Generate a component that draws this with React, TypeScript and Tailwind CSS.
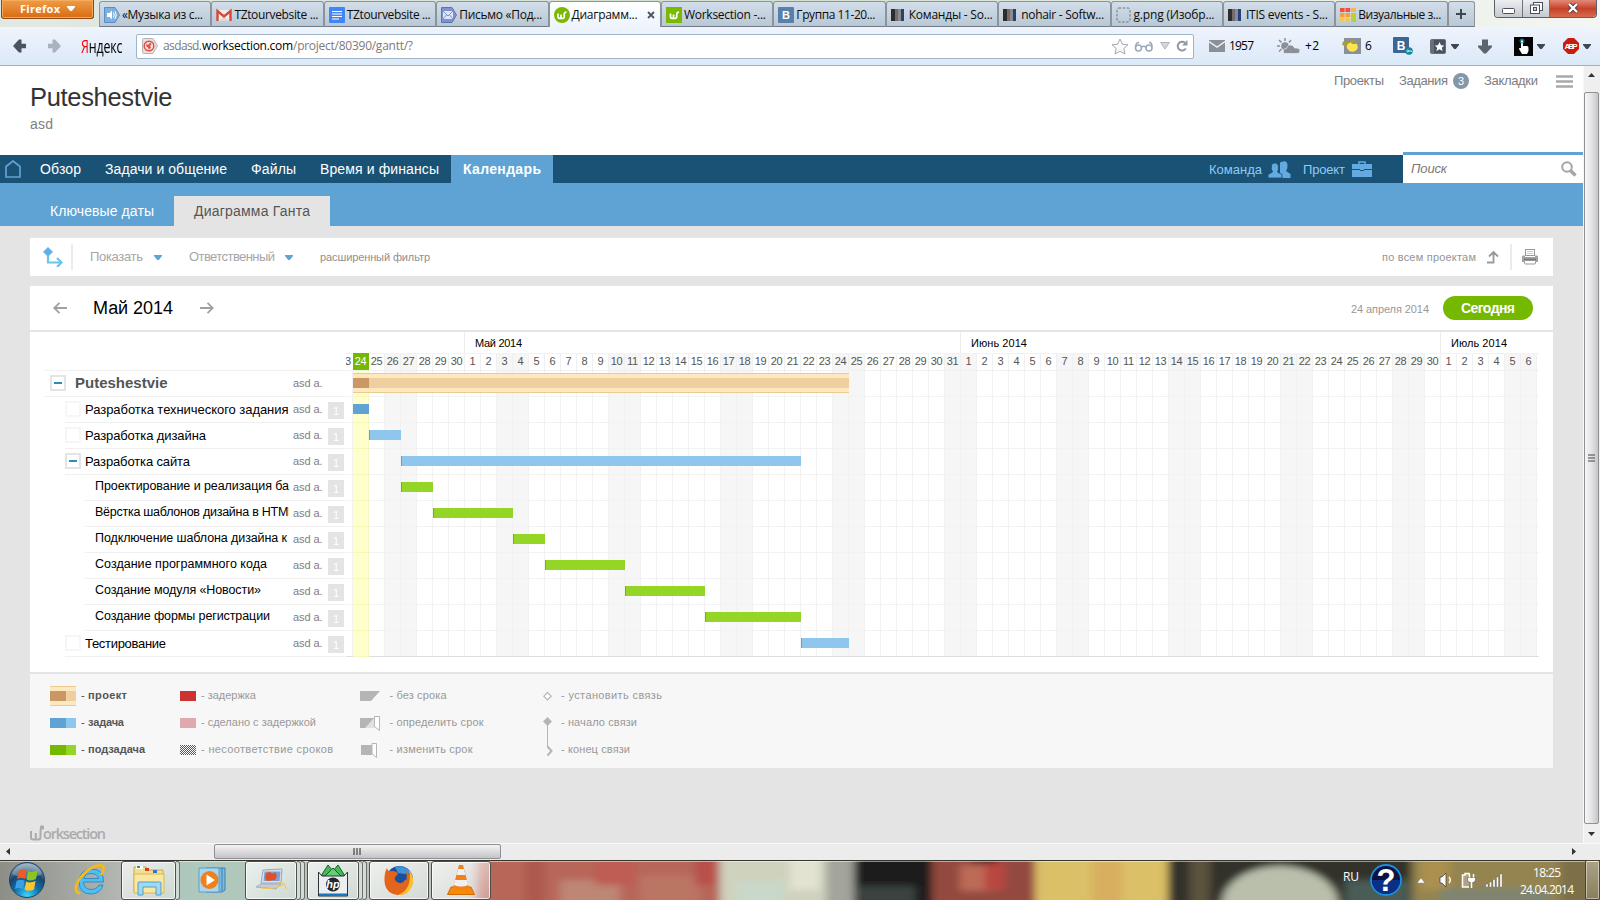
import React, { useLayoutEffect, useRef } from 'react';

const ARIAL = "font-['Liberation_Sans',Arial,sans-serif]";
const SEGOE = "font-['Open_Sans','Noto_Sans',sans-serif]";

/** Single line of text whose letter spacing is tuned so that it spans exactly `w` pixels. */
function Fit({ w, className = '', children }: { w: number; className?: string; children: string }) {
  const ref = useRef<HTMLSpanElement>(null);
  useLayoutEffect(() => {
    const el = ref.current;
    if (!el) return;
    el.style.letterSpacing = '0px';
    const natural = el.getBoundingClientRect().width;
    el.style.letterSpacing = (w - natural) / Math.max(1, children.length - 1) + 'px';
  }, [w, children]);
  return (
    <span className={'inline-block shrink-0 whitespace-nowrap ' + className} style={{ width: w }}>
      <span ref={ref}>{children}</span>
    </span>
  );
}

function Caret({ className = '' }: { className?: string }) {
  return (
    <svg viewBox="0 0 8 5" className={'h-[5px] w-2 shrink-0 ' + className}>
      <path d="M0 0H8V1L4.800 5H3.200L0 1Z" fill="currentColor" />
    </svg>
  );
}

/* ---------- favicons ---------- */

const favicons: Record<string, React.ReactNode> = {
  sound: (
    <>
      <path d="M.5 .5H11L15.5 8L11 15.5H.5Z" fill="#7fb0dc" stroke="#5b8fc4" />
      <path d="M3 6H5.500L8 3.500V12.500L5.500 10H3Z" fill="#fff" />
      <path d="M9.500 5.500Q11 8 9.500 10.500M11 4Q13.500 8 11 12" stroke="#fff" fill="none" />
    </>
  ),
  gmail: (
    <>
      <rect x="1" y="3" width="14" height="11" fill="#f1eeea" />
      <path d="M3 14L8 9L13 14" fill="#dcd8d2" />
      <path d="M1.500 14V4L8 9.500L14.500 4V14" fill="none" stroke="#d5483c" strokeWidth="2.400" />
    </>
  ),
  docs: (
    <>
      <rect width="16" height="16" rx="1" fill="#4285f4" />
      <path d="M3 4.500H13M3 7H13M3 9.500H13M3 12H10" stroke="#fff" strokeWidth="1.200" />
    </>
  ),
  letter: (
    <>
      <path d="M.5 .5H11L15.500 8L11 15.500H.5Z" fill="#7d93cf" stroke="#5d74b4" />
      <rect x="2" y="4" width="10" height="8" fill="#dfe5f6" />
      <path d="M2 4L7 9L12 4M2 12L5.500 8M12 12L8.500 8" stroke="#7d93cf" fill="none" />
    </>
  ),
  wsRound: (
    <>
      <circle cx="8" cy="8" r="8" fill="#79b900" />
      <path d="M4 6.500V9.500Q4 11.300 5.500 11.300H9Q10.200 11.300 10.200 10V7.500Q10.200 5.300 12.500 5M7 7.500V11" stroke="#fff" strokeWidth="1.700" fill="none" />
    </>
  ),
  ws: (
    <>
      <rect width="16" height="16" fill="#79b900" />
      <path d="M4.500 6.500V9.500Q4.500 11.300 6 11.300H9.500Q10.700 11.300 10.700 10V7.500Q10.700 5.300 13 5M7.500 7.500V11" stroke="#fff" strokeWidth="1.700" fill="none" />
    </>
  ),
  vk: (
    <>
      <rect width="16" height="16" rx="1" fill="#5a7fab" />
      <text x="8" y="12" textAnchor="middle" fontSize="11" fontWeight="bold" fill="#fff" fontFamily="Liberation Sans">В</text>
    </>
  ),
  bars: (
    <>
      <rect x="0" y="2" width="4" height="12" fill="#2d2d30" />
      <rect x="4" y="2" width="3" height="12" fill="#6e6e70" />
      <rect x="7" y="2" width="3" height="12" fill="#8f8a88" />
      <rect x="10" y="2" width="3" height="12" fill="#24407f" />
    </>
  ),
  blank: <rect x="1" y="1" width="13" height="14" rx="2" fill="none" stroke="#6d747c" strokeDasharray="2.500 1.500" />,
  visual: (
    <>
      <rect x="0" y="1" width="16" height="4" fill="#f0503c" />
      <rect x="0" y="6" width="16" height="4" fill="#f7a03a" />
      <rect x="0" y="11" width="10" height="4" fill="#f6c84a" />
      <rect x="11" y="1" width="5" height="4" fill="#f7b84a" />
      <rect x="11" y="6" width="5" height="9" fill="#b5d335" />
      <path d="M5 1V15M10.500 1V15" stroke="#d5dde5" strokeWidth=".8" />
    </>
  ),
};

const tabs: { icon: string; title: string; w: number; active?: boolean }[] = [
  { icon: 'sound', title: '«Музыка из с...', w: 81 },
  { icon: 'gmail', title: 'TZtourvebsite ...', w: 84 },
  { icon: 'docs', title: 'TZtourvebsite ...', w: 84 },
  { icon: 'letter', title: 'Письмо «Под...', w: 83 },
  { icon: 'wsRound', title: 'Диаграмм...', w: 66, active: true },
  { icon: 'ws', title: 'Worksection -...', w: 82 },
  { icon: 'vk', title: 'Группа 11-20...', w: 79 },
  { icon: 'bars', title: 'Команды - So...', w: 84 },
  { icon: 'bars', title: 'nohair - Softw...', w: 83 },
  { icon: 'blank', title: 'g.png (Изобр...', w: 81 },
  { icon: 'bars', title: 'ITIS events - S...', w: 82 },
  { icon: 'visual', title: 'Визуальные з...', w: 83 },
];

function TabStrip() {
  return (
    <div className="flex h-[27px] shrink-0 bg-gradient-to-r from-[#e2e8e3] via-[#d3dfcf] to-[#f4f6f3]">
      <div className="ml-px flex h-[19px] w-[93px] items-center rounded-b-[3px] border border-t-0 border-[#8a4a14] bg-gradient-to-b from-[#ee9d45] to-[#d96a0c] pb-px pl-[18px] shadow-[inset_0_0_0_1px_#f3ab5c]">
        <Fit w={40} className="text-[11px] leading-none font-bold text-white">Firefox</Fit>
        <Caret className="ml-[7px] text-white" />
      </div>
      <div className="ml-[5px] flex pt-px">
        {tabs.map((t, i) => (
          <div
            key={i}
            className={
              'flex h-[26px] w-[112.400px] items-center rounded-t-[3px] border border-r-[1px] border-[#8b939b] pt-px pl-1 ' +
              (t.active ? 'border-b-0 bg-gradient-to-b from-white to-[#eef4fd]' : 'border-b-[#6f7a86] bg-gradient-to-b from-[#d2deea] to-[#b9c8d5]')
            }
          >
            <svg viewBox="0 0 16 16" className="size-4 shrink-0">{favicons[t.icon]}</svg>
            <Fit w={t.w} className="ml-[2px] text-[12px] leading-none text-[#0c0c0c]">{t.title}</Fit>
            {t.active && (
              <svg viewBox="0 0 8 8" className="ml-[9px] size-2"><path d="M1 1L7 7M7 1L1 7" stroke="#4c5661" strokeWidth="1.800" /></svg>
            )}
          </div>
        ))}
        <div className="flex h-[26px] w-[27px] items-center justify-center rounded-t-[3px] border border-[#8b939b] border-b-[#6f7a86] bg-gradient-to-b from-[#d2deea] to-[#b9c8d5]">
          <svg viewBox="0 0 10 10" className="size-[10px]"><path d="M5 0V10M0 5H10" stroke="#3c4650" strokeWidth="2" /></svg>
        </div>
      </div>
      <div className="ml-auto mr-[3px] flex h-[18px] w-[103px] overflow-hidden rounded-b-[4px] border border-t-0 border-[#5b6068]">
        <div className="flex w-[28px] items-center justify-center border-r border-[#70757c] bg-gradient-to-b from-[#eceef0] to-[#c6cacf]">
          <svg viewBox="0 0 13 6" className="mt-1 h-[6px] w-[13px]"><rect x=".5" y=".5" width="12" height="5" rx="1" fill="#fff" stroke="#4b4f62" /></svg>
        </div>
        <div className="flex w-[27px] items-center justify-center border-r border-[#70757c] bg-gradient-to-b from-[#eceef0] to-[#c6cacf] pb-[2px]">
          <svg viewBox="0 0 13 12" className="h-3 w-[13px]">
            <rect x="3.500" y=".5" width="9" height="8" fill="#fff" stroke="#4b4f62" />
            <rect x=".5" y="3" width="9" height="8.500" fill="#fff" stroke="#4b4f62" />
            <rect x="3.500" y="5.500" width="3" height="3" fill="#cfd3da" stroke="#4b4f62" />
          </svg>
        </div>
        <div className="flex flex-1 items-center justify-center bg-gradient-to-b from-[#e08a76] via-[#c7402a] to-[#d46a4a] pb-[2px]">
          <svg viewBox="0 0 12 10" className="h-[10px] w-3">
            <path d="M2 1L10 9M10 1L2 9" stroke="#4b3a48" strokeWidth="4" />
            <path d="M2 1L10 9M10 1L2 9" stroke="#fff" strokeWidth="2.400" />
          </svg>
        </div>
      </div>
    </div>
  );
}

function Toolbar() {
  return (
    <div className="flex h-[39px] shrink-0 items-center border-b border-[#9db4c8] bg-gradient-to-b from-[#eff4fd] to-[#dbe9f7] pl-px text-[12px] text-black">
      <svg viewBox="0 0 13 14" className="ml-3 h-[14px] w-[13px] shrink-0"><path d="M0 7L6 .5H8.500V4.800H13V9.200H8.500V13.500H6Z" fill="#4a5460" /></svg>
      <svg viewBox="0 0 13 14" className="ml-[22px] h-[14px] w-[13px] shrink-0"><path d="M13 7L7 .5H4.500V4.800H0V9.200H4.500V13.500H7Z" fill="#a9b3bf" /></svg>
      <div className="ml-[20px] flex h-5 w-[43px] items-center">
        <div className="flex origin-left scale-x-[.69] text-[18px] leading-none font-normal tracking-[-0.2px]">
          <span className="text-[#f00]">Я</span><span>ндекс</span>
        </div>
      </div>
      <div className="ml-[12px] flex h-[25px] w-[1058px] shrink-0 items-center rounded-[2px] border border-[#9fb4c8] bg-white">
        <svg viewBox="0 0 16 16" className="ml-[5px] size-4">
          <path d="M.5 1.500Q.5 .5 1.500 .5H11L15.500 8L11 15.500H1.500Q.5 15.500 .5 14.500Z" fill="#e2e2e2" stroke="#b5b5b5" />
          <circle cx="7" cy="8" r="4.800" fill="#f7dcda" stroke="#dc4f48" strokeWidth="1.400" />
          <path d="M4 6L6 7L8.500 4.500L9.500 6L8 8L9 9.500L7 11.500L6 9.500L4.500 8.500Z" fill="#dc4f48" />
        </svg>
        <Fit w={39} className="ml-[5px] text-[#7b7b7b]">asdasd.</Fit>
        <Fit w={91}>worksection.com</Fit>
        <Fit w={120} className="text-[#7b7b7b]">/project/80390/gantt/?</Fit>
        <svg viewBox="0 0 18 17" className="ml-auto h-[17px] w-[18px]"><path d="M9 1L11.400 6.200L17 6.800L12.800 10.500L14 16L9 13.200L4 16L5.200 10.500L1 6.800L6.600 6.200Z" fill="#fafafa" stroke="#a3a9b0" /></svg>
        <svg viewBox="0 0 20 11" className="ml-[5px] h-[11px] w-5" fill="none" stroke="#9ba9b8" strokeWidth="1.600">
          <circle cx="4.500" cy="7" r="3" /><circle cx="15" cy="7" r="3" /><path d="M7.500 6Q9.700 4.500 12 6M1.500 6Q2 1 5 1.500M18 6Q18 1 15 1.500" />
        </svg>
        <svg viewBox="0 0 10 8" className="ml-[6px] h-2 w-[10px]"><path d="M.7 .5H9.300L5 7Z" fill="#d5d9de" stroke="#a9b1ba" /></svg>
        <svg viewBox="0 0 12 12" className="mr-[5px] ml-[6px] size-3">
          <path d="M9.800 8.500A4.400 4.400 0 1 1 9 2.800" fill="none" stroke="#8b98a6" strokeWidth="2" /><path d="M11.500 0V5.500H6Z" fill="#8b98a6" />
        </svg>
      </div>
      <svg viewBox="0 0 16 12" className="ml-[15px] h-3 w-4"><rect width="16" height="12" fill="#8a9096" /><path d="M0 1.500L8 7L16 1.500" stroke="#e6effa" strokeWidth="1.500" fill="none" /></svg>
      <Fit w={25} className="ml-[4px]">1957</Fit>
      <svg viewBox="0 0 24 16" className="ml-[23px] h-4 w-6">
        <g stroke="#8a9096" strokeWidth="1.500"><path d="M8 0V3M2 2L4.500 4.500M0 8H3M14 2L12 4.500M2 13.500L4.500 11" /></g>
        <circle cx="8" cy="8" r="3.800" fill="#8a9096" />
        <path d="M7 15.500Q4.500 11 9.500 10.500Q11 5.500 15.500 7.500Q17.500 9 17.500 10Q23 9.500 23 13Q23 15.500 20 15.500Z" fill="#8a9096" stroke="#e6effa" strokeWidth=".7" />
      </svg>
      <Fit w={14} className="ml-[4px]">+2</Fit>
      <svg viewBox="0 0 19 16" className="ml-[23px] h-4 w-[19px]">
        <rect x="2" width="17" height="16" fill="#8a9096" />
        <path d="M1 3.500H8L9 2H14L12 5H9L4 9L0 6.500Z" fill="#a99c3c" /><path d="M9 4.500Q10 7 14.500 5.500Q17 9 14.500 12Q11.500 15 7.500 13Q4 10.500 5 7Q6.500 4.500 9 4.500Z" fill="#fbe64d" />
      </svg>
      <Fit w={7} className="ml-[4px]">6</Fit>
      <svg viewBox="0 0 20 18" className="ml-[21px] h-[18px] w-5">
        <rect width="16" height="16" rx="1" fill="#3b6595" />
        <text x="8" y="12.500" textAnchor="middle" fontSize="12" fontWeight="bold" fill="#fff" fontFamily="Liberation Sans">В</text>
        <circle cx="16" cy="14" r="3.800" fill="#10879c" /><circle cx="14.800" cy="14" r="1" fill="none" stroke="#fff" strokeWidth=".7" /><path d="M15.800 14H18.500V15" stroke="#fff" strokeWidth=".8" fill="none" />
      </svg>
      <svg viewBox="0 0 16 15" className="ml-[17px] h-[15px] w-4">
        <rect width="16" height="15" rx="2" fill="#66707b" /><rect x="4" y="1" width="11" height="13" fill="#4a5460" />
        <path d="M9.500 3L11 6.300L14.300 6.600L11.800 8.800L12.600 12L9.500 10.300L6.400 12L7.200 8.800L4.700 6.600L8 6.300Z" fill="#fff" />
      </svg>
      <Caret className="ml-[5px] text-[#3e4853]" />
      <svg viewBox="0 0 14 15" className="ml-[19px] h-[15px] w-[14px]"><path d="M4 .5H10V6.500H14V8L8 14.500H6L0 8V6.500H4Z" fill="#5b6570" /></svg>
      <svg viewBox="0 0 19 19" className="ml-[22px] size-[19px]">
        <rect width="19" height="19" fill="#050505" />
        <path d="M7 4Q8 2 9 4V9H13Q14.500 9 14.500 11V14L13 17H8L5 12Q4.500 10.500 7 11Z" fill="#fff" /><circle cx="8" cy="4" r="2" fill="none" stroke="#1b9bb0" />
      </svg>
      <Caret className="ml-[4px] text-[#3e4853]" />
      <svg viewBox="0 0 16 16" className="ml-[18px] size-4">
        <path d="M5 0H11L16 5V11L11 16H5L0 11V5Z" fill="#c91c10" />
        <text x="8" y="11" textAnchor="middle" fontSize="8" textLength="13" fontWeight="bold" fill="#fff" fontFamily="Liberation Sans">ABP</text>
      </svg>
      <Caret className="ml-[4px] text-[#3e4853]" />
    </div>
  );
}

function PageHeader() {
  return (
    <div className="flex h-[89px] shrink-0 bg-white">
      <div className="flex flex-1 flex-col pt-[17px] pl-[30px]">
        <Fit w={142.5} className="text-[25.500px] leading-7 text-[#333]">Puteshestvie</Fit>
        <Fit w={23} className="mt-[5px] text-[14px] leading-4 text-[#808080]">asd</Fit>
      </div>
      <div className="flex h-[30px] items-center pr-[10px] text-[13px] text-[#7d7d7d]">
        <Fit w={50}>Проекты</Fit>
        <Fit w={49} className="ml-[15px]">Задания</Fit>
        <span className="ml-[5px] flex size-4 items-center justify-center rounded-full bg-[#8496a8] text-[11px] text-white">3</span>
        <Fit w={54} className="ml-[15px]">Закладки</Fit>
        <svg viewBox="0 0 17 13" className="ml-[18px] h-[13px] w-[17px]"><path d="M0 1.500H17M0 6.500H17M0 11.500H17" stroke="#a9a9a9" strokeWidth="2.400" /></svg>
      </div>
    </div>
  );
}

function NavBars() {
  return (
    <>
      <div className="flex h-7 shrink-0 items-center bg-[#1a5276] text-[14px] text-white">
        <svg viewBox="0 0 16 18" className="-mt-px ml-[5px] h-[18px] w-4"><path d="M1 17V6.500L8 1L15 6.500V17Z" fill="none" stroke="#5fa3d4" strokeWidth="1.700" /></svg>
        <Fit w={41} className="ml-[19px]">Обзор</Fit>
        <Fit w={122} className="ml-6">Задачи и общение</Fit>
        <Fit w={45} className="ml-6">Файлы</Fit>
        <Fit w={119} className="ml-6">Время и финансы</Fit>
        <div className="ml-3 flex h-7 w-[102px] items-center bg-[#5fa3d4] pl-3 font-bold"><Fit w={78}>Календарь</Fit></div>
        <div className="ml-auto flex items-center text-[13px] text-[#8ecbf5]">
          <Fit w={53} className="pt-px">Команда</Fit>
          <svg viewBox="0 0 23 17" className="ml-[6px] h-[17px] w-[23px]" fill="#63aae0">
            <path d="M15 .5Q19.500 -.5 19.500 5Q19.500 8 18 10L22.500 13V17H12V1.500Z" />
            <path d="M0 17V13.500L4.500 11Q2.500 8 3.500 4Q4.500 1.500 7.500 2Q11 2.500 10.500 7Q10.500 9 9.500 11L14 13.500V17Z" stroke="#1a5276" strokeWidth=".9" />
          </svg>
          <Fit w={42} className="ml-[12px] pt-px">Проект</Fit>
          <svg viewBox="0 0 20 16" className="ml-[7px] h-4 w-5">
            <path d="M0 3H20V16H0Z" fill="#63aae0" /><path d="M7 3V1H13V3" stroke="#63aae0" strokeWidth="1.500" fill="none" />
            <path d="M0 8.500H8M12 8.500H20M8 9.500H12" stroke="#1a5276" strokeWidth="1" fill="none" />
          </svg>
          <div className="-mt-[3px] ml-[31px] flex h-[31px] w-[180px] items-center border-t-[3px] border-[#5fa3d4] bg-white pr-[6px] pl-2">
            <Fit w={36} className="text-[#777] italic">Поиск</Fit>
            <svg viewBox="0 0 16 16" className="ml-auto size-4"><circle cx="6" cy="6" r="4.800" fill="none" stroke="#a5a5a5" strokeWidth="2" /><path d="M9.500 9.500L14.500 14.500" stroke="#a5a5a5" strokeWidth="3.400" /></svg>
          </div>
        </div>
      </div>
      <div className="flex h-[43px] shrink-0 items-end bg-[#5fa3d4] text-[14px]">
        <div className="ml-[50px] flex h-[30px] w-[124px] items-center text-white"><Fit w={104}>Ключевые даты</Fit></div>
        <div className="flex h-[30px] w-[156px] items-center bg-[#e4e4e4] pl-5 text-[#555]"><Fit w={116}>Диаграмма Ганта</Fit></div>
      </div>
    </>
  );
}

function FilterBar() {
  return (
    <div className="mt-3 ml-[30px] flex h-[38px] w-[1523px] shrink-0 items-center bg-white text-[13px] text-[#a6a6a6]">
      <svg viewBox="0 0 20 20" className="ml-[13px] size-5">
        <path d="M5 5V15.500H17" fill="none" stroke="#6cc4ea" strokeWidth="2.200" />
        <path d="M5 0L10 5L5 9.500L0 5Z" fill="#5fb2e4" />
        <path d="M14 11L18.500 15.500L14 20" fill="none" stroke="#6cc4ea" strokeWidth="2.200" />
      </svg>
      <div className="ml-2 h-[26px] w-[2px] bg-[#ebebeb]" />
      <Fit w={53} className="ml-[17px]">Показать</Fit>
      <Caret className="mt-px ml-[11px] text-[#5fa3d4]" />
      <Fit w={86} className="ml-[27px]">Ответственный</Fit>
      <Caret className="mt-px ml-[10px] text-[#5fa3d4]" />
      <Fit w={110} className="ml-[27px] text-[11px] text-[#909090]">расширенный фильтр</Fit>
      <Fit w={94} className="ml-auto text-[11px] text-[#959595]">по всем проектам</Fit>
      <svg viewBox="0 0 12 13" className="ml-[11px] h-[13px] w-3"><path d="M0 11.500H6.500V2M2 5.500L6.500 1L11 5.500" fill="none" stroke="#999" strokeWidth="1.800" /></svg>
      <div className="ml-[11px] h-[26px] w-[2px] bg-[#ebebeb]" />
      <svg viewBox="0 0 16 16" className="mr-[15px] ml-[10px] size-4">
        <rect x="3.500" y=".5" width="9" height="6" fill="#fff" stroke="#999" /><path d="M5 2.500H11M5 4.500H11" stroke="#ccc" />
        <path d="M0 8Q0 6.500 1 6.500H3V8H13V6.500H15Q16 6.500 16 8V13H0Z" fill="#a0a0a0" /><path d="M2 10.500H14" stroke="#777" strokeWidth="1.500" /><rect x="2.500" y="11.500" width="11" height="3.500" rx="1" fill="#fff" stroke="#999" />
      </svg>
    </div>
  );
}

/* ---------- gantt ---------- */

interface Day { label: number; weekend: boolean; today: boolean }
const days: Day[] = Array.from({ length: 74 }, (_, i) => {
  const d = new Date(2014, 3, 24 + i);
  return { label: d.getDate(), weekend: d.getDay() % 6 === 0, today: i === 0 };
});

interface Task { name: string; level: 0 | 1 | 2; box?: 'minus' | 'empty'; start: number; len: number; w: number; kind: 'project' | 'task' | 'done' | 'sub' }
const tasks: Task[] = [
  { name: 'Puteshestvie', level: 0, box: 'minus', start: 0, len: 31, w: 92.5, kind: 'project' },
  { name: 'Разработка технического задания', level: 1, box: 'empty', start: 0, len: 1, w: 203.5, kind: 'done' },
  { name: 'Разработка дизайна', level: 1, box: 'empty', start: 1, len: 2, w: 121, kind: 'task' },
  { name: 'Разработка сайта', level: 1, box: 'minus', start: 3, len: 25, w: 105, kind: 'task' },
  { name: 'Проектирование и реализация ба', level: 2, start: 3, len: 2, w: 194, kind: 'sub' },
  { name: 'Вёрстка шаблонов дизайна в HTML', level: 2, start: 5, len: 5, w: 200, kind: 'sub' },
  { name: 'Подключение шаблона дизайна к', level: 2, start: 10, len: 2, w: 192, kind: 'sub' },
  { name: 'Создание программного кода', level: 2, start: 12, len: 5, w: 172, kind: 'sub' },
  { name: 'Создание модуля «Новости»', level: 2, start: 17, len: 5, w: 166, kind: 'sub' },
  { name: 'Создание формы регистрации', level: 2, start: 22, len: 6, w: 175, kind: 'sub' },
  { name: 'Тестирование', level: 1, box: 'empty', start: 28, len: 3, w: 81, kind: 'task' },
];

function TaskRow({ t }: { t: Task }) {
  const indent = t.level === 0 ? 'ml-[15px]' : t.level === 1 ? 'ml-[35px]' : 'ml-[55px]';
  const textPad = t.level === 0 ? 'ml-[9px] text-[15px] font-bold text-[#555] -mt-px' : t.level === 1 ? 'ml-1 text-[13px] text-black' : 'ml-[10px] text-[12.500px] text-black -mt-[3px]';
  return (
    <div className={'flex h-[26px] items-center border-b border-[#f0f0f0] ' + indent}>
      {t.box === 'minus' && (
        <div className={'flex size-4 shrink-0 items-center justify-center border-2 border-[#e4e4e4] -mt-0.5 ' + (t.level === 0 ? 'ml-[5px]' : '')}>
          <div className="h-[2px] w-2 bg-[#2a8dc0]" />
        </div>
      )}
      {t.box === 'empty' && <div className="-mt-0.5 size-4 shrink-0 border-2 border-[#f6f6f6]" />}
      <div className={'min-w-0 flex-1 overflow-hidden leading-6 ' + textPad}><Fit w={t.w}>{t.name}</Fit></div>
      <Fit w={29.5} className="-mt-px ml-1 text-[11px] text-[#808080]">asd a.</Fit>
      <div className={'ml-[5.500px] flex h-[17px] w-4 shrink-0 items-center justify-center pt-px text-[11px] text-white ' + (t.level === 0 ? 'mr-px' : 'mt-[2px] mr-px bg-[#e4e4e4]')}>
        {t.level > 0 && '1'}
      </div>
    </div>
  );
}

function Bar({ t }: { t: Task }) {
  const pos = { left: 7 + t.start * 16, width: t.len * 16 };
  if (t.kind === 'project') {
    return (
      <div className="absolute top-[2px] flex h-5 items-center border-y border-[#f0c990] bg-[#fde9c0]" style={pos}>
        <div className="h-[10px] w-4 bg-[#cb9865]" /><div className="h-[10px] flex-1 bg-[#efcfa0]" />
      </div>
    );
  }
  const color = t.kind === 'done' ? 'bg-[#5fa3d4]' : t.kind === 'task' ? 'bg-[#8ec6ee] border-l border-[#5fa3d4]' : 'bg-[#94d526] border-l border-[#74b900]';
  return <div className={'absolute top-[7px] h-[10px] ' + color} style={pos} />;
}

function Chart() {
  return (
    <div className="flex w-[1193px] flex-col">
      <div className="flex h-[22px] border-b border-[#f2f2f2] text-[11px] text-black">
        <div className="w-[118px]" />
        <div className="flex w-[496px] items-center border-l border-[#ececec] pt-[2px] pl-[10px]"><Fit w={47}>Май 2014</Fit></div>
        <div className="flex w-[480px] items-center border-l border-[#ececec] pt-[2px] pl-[10px]"><Fit w={56}>Июнь 2014</Fit></div>
        <div className="flex w-[98px] items-center border-l border-[#ececec] pt-[2px] pl-[10px]"><Fit w={56}>Июль 2014</Fit></div>
      </div>
      <div className="flex h-[17px] border-b border-[#f0f0f0] text-[11px] leading-[15px] text-[#555]">
        <div className="flex w-[7px] justify-end overflow-hidden pr-[2px]">3</div>
        {days.map((d, i) => (
          <div key={i} className={'flex w-4 shrink-0 justify-center border-r tracking-[-0.3px] ' + (d.today ? '-mt-px border-[#74b900] bg-[#74b900] pt-px text-white' : d.weekend ? 'border-[#f0f0f0] bg-[#f6f6f6]' : 'border-[#f0f0f0]')}>
            {d.label}
          </div>
        ))}
      </div>
      {tasks.map((t, r) => (
        <div key={r} className={'relative flex h-[26px] border-b ' + (r === tasks.length - 1 ? 'border-[#dedede]' : 'border-[#f2f2f2]')}>
          <div className="w-[7px] border-r border-[#f2f2f2]" />
          {days.map((d, i) => (
            <div key={i} className={'w-4 shrink-0 border-r ' + (d.today ? '-mb-px border-b border-r-[#f6f6c0] border-b-[#f7f7b8] bg-[#ffffcc]' : d.weekend ? 'border-[#f1f1f1] bg-[#f6f6f6]' : 'border-[#f2f2f2]')} />
          ))}
          <Bar t={t} />
        </div>
      ))}
    </div>
  );
}

function Gantt() {
  return (
    <div className="mt-[10px] ml-[30px] w-[1523px] shrink-0 bg-white">
      <div className="flex h-[46px] items-center border-b-2 border-[#e4e4e4]">
        <svg viewBox="0 0 14 12" className="ml-[23px] h-3 w-[14px]"><path d="M14 6H1.500M6.500 .8L1.200 6L6.500 11.200" fill="none" stroke="#a0a0a0" strokeWidth="1.800" /></svg>
        <Fit w={80} className="ml-[26px] text-[18px] text-black">Май 2014</Fit>
        <svg viewBox="0 0 14 12" className="ml-[27px] h-3 w-[14px]"><path d="M0 6H12.500M7.500 .8L12.800 6L7.500 11.200" fill="none" stroke="#a0a0a0" strokeWidth="1.800" /></svg>
        <Fit w={78} className="mt-[3px] ml-auto text-[11px] text-[#999]">24 апреля 2014</Fit>
        <div className="mr-5 ml-[14px] flex h-6 w-[90px] items-center justify-center rounded-full bg-[#74b900] text-[14px] font-bold text-white"><Fit w={54}>Сегодня</Fit></div>
      </div>
      <div className="flex h-[340px]">
        <div className="flex w-[315px] flex-col">
          <div className="ml-[15px] h-[39px] border-b border-[#f0f0f0]" />
          {tasks.map((t, i) => <TaskRow key={i} t={t} />)}
        </div>
        <div className="ml-px"><Chart /></div>
      </div>
      <Legend />
    </div>
  );
}

function Legend() {
  const pairs = [
    { a: 'bg-[#cb9865]', b: 'bg-[#efcfa0]', label: 'проект', w: 39, project: true },
    { a: 'bg-[#5fa3d4]', b: 'bg-[#8ec6ee]', label: 'задача', w: 36, project: false },
    { a: 'bg-[#74b900]', b: 'bg-[#94d526]', label: 'подзадача', w: 57, project: false },
  ];
  return (
    <div className="flex h-24 border-t-2 border-[#e4e4e4] bg-[#f7f7f7] pt-2 text-[11px] text-[#999]">
      <div className="ml-5 flex w-[130px] flex-col">
        {pairs.map((p) => (
          <div key={p.label} className="flex h-[27px] items-center">
            <div className={'flex h-5 w-[26px] items-center ' + (p.project ? 'border-y border-[#f0c990] bg-[#fde9c0]' : '')}>
              <div className={'h-[10px] w-4 ' + p.a} /><div className={'h-[10px] w-[10px] ' + p.b} />
            </div>
            <span className="ml-[5px] w-[7px] text-[#444]">-</span>
            <Fit w={p.w} className="font-bold text-[#555]">{p.label}</Fit>
          </div>
        ))}
      </div>
      <div className="flex w-[180px] flex-col">
        <div className="flex h-[27px] items-center"><div className="h-[10px] w-4 bg-[#cc3333]" /><Fit w={55} className="ml-[5px]">- задержка</Fit></div>
        <div className="flex h-[27px] items-center"><div className="h-[10px] w-4 bg-[#dfaaad]" /><Fit w={115} className="ml-[5px]">- сделано с задержкой</Fit></div>
        <div className="flex h-[27px] items-center">
          <svg viewBox="0 0 16 10" className="h-[10px] w-4" shapeRendering="crispEdges">
            <rect width="16" height="10" fill="#fff" />
            {Array.from({ length: 10 }, (_, y) => (
              <path key={y} d={`M${y % 2} ${y + 0.5}H16`} stroke="#ff1111" strokeDasharray="1 1" />
            ))}
          </svg>
          <Fit w={132} className="ml-[5px]">- несоответствие сроков</Fit>
        </div>
      </div>
      <div className="flex w-[183px] flex-col">
        <div className="flex h-[27px] items-center">
          <svg viewBox="0 0 20 16" className="h-4 w-5"><path d="M0 3H20L11 13H0Z" fill="#b5b5b5" /></svg>
          <Fit w={57} className="ml-[9.500px]">- без срока</Fit>
        </div>
        <div className="flex h-[27px] items-center">
          <svg viewBox="0 0 20 16" className="h-4 w-5"><path d="M0 3H15V13H0Z" fill="#e0e0e0" /><path d="M0 3H14L5 13H0Z" fill="#b5b5b5" /><path d="M14.500 1.500H19.500V15.500L14.500 11.500Z" fill="#fff" stroke="#b5b5b5" /></svg>
          <Fit w={94} className="ml-[9.500px]">- определить срок</Fit>
        </div>
        <div className="flex h-[27px] items-center">
          <svg viewBox="0 0 20 16" className="h-4 w-5"><path d="M1 3H12V13H1Z" fill="#b5b5b5" /><path d="M12 1.500H16.500V15.500L12 11.500Z" fill="#fff" stroke="#b5b5b5" /></svg>
          <Fit w={83} className="ml-[9.500px]">- изменить срок</Fit>
        </div>
      </div>
      <svg viewBox="0 0 10 81" className="h-[81px] w-[10px]">
        <path d="M4.500 10.500L8.200 14.200L4.500 18L.8 14.200Z" fill="#fff" stroke="#b5b5b5" strokeWidth="1.200" />
        <path d="M4.500 35L9 39.500L4.500 44L0 39.500Z" fill="#b5b5b5" />
        <path d="M4.500 42V65" stroke="#b5b5b5" />
        <path d="M4.500 64.500L8.500 69L4.500 73.500" stroke="#b5b5b5" strokeWidth="2" fill="none" />
      </svg>
      <div className="ml-2 flex flex-col">
        <div className="flex h-[27px] items-center"><Fit w={101}>- установить связь</Fit></div>
        <div className="flex h-[27px] items-center"><Fit w={76}>- начало связи</Fit></div>
        <div className="flex h-[27px] items-center"><Fit w={69}>- конец связи</Fit></div>
      </div>
    </div>
  );
}

function VerticalScroll() {
  return (
    <div className="flex w-[17px] flex-col items-start border-l border-[#f8f8f8] bg-[#efefef]">
      <div className="flex h-[26px] w-[15px] items-center justify-center"><svg viewBox="0 0 7 4" className="-mt-[8px] h-1 w-[7px]"><path d="M3.500 0L7 4H0Z" fill="#333" /></svg></div>
      <div className="flex h-[732px] w-[15px] items-center justify-center rounded-[2px] border border-[#8f8f94] bg-gradient-to-r from-[#f6f6f6] via-[#e4e4e6] to-[#c6c6ca]">
        <svg viewBox="0 0 7 8" className="h-2 w-[7px]"><path d="M0 1H7M0 4H7M0 7H7" stroke="#444" strokeWidth="1.200" /></svg>
      </div>
      <div className="flex h-[19px] w-[15px] items-center justify-center"><svg viewBox="0 0 7 4" className="h-1 w-[7px]"><path d="M0 0H7L3.500 4Z" fill="#333" /></svg></div>
    </div>
  );
}

function HorizontalScroll() {
  return (
    <div className="flex h-[17px] shrink-0 items-start border-t border-[#fafafa] bg-[#ececec]">
      <svg viewBox="0 0 4 7" className="mt-1 ml-[6px] h-[7px] w-1"><path d="M4 0V7L0 3.500Z" fill="#333" /></svg>
      <div className="ml-[204px] flex h-[15px] w-[287px] items-center justify-center rounded-[2px] border border-[#8f8f94] bg-gradient-to-b from-[#f4f4f4] via-[#dcdcde] to-[#c4c4c8]">
        <svg viewBox="0 0 8 7" className="-ml-[2px] h-[7px] w-2"><path d="M1 0V7M4 0V7M7 0V7" stroke="#444" strokeWidth="1.200" /></svg>
      </div>
      <svg viewBox="0 0 4 7" className="mt-1 mr-6 ml-auto h-[7px] w-1"><path d="M0 0V7L4 3.500Z" fill="#333" /></svg>
    </div>
  );
}

/* ---------- taskbar ---------- */

function TaskButton({ w, extra = 0, children }: { w: number; extra?: number; children: React.ReactNode }) {
  return (
    <div className="flex shrink-0">
      <div className="flex h-[39px] items-center justify-center rounded-[3px] border border-[#4b504d] bg-gradient-to-br from-white/75 to-white/35 shadow-[inset_0_0_0_1px_rgba(255,255,255,.7)]" style={{ width: w }}>{children}</div>
      {Array.from({ length: extra }, (_, i) => <div key={i} className="h-[39px] w-1 rounded-r-[3px] border border-l-0 border-[#6b706d] bg-white/40" />)}
    </div>
  );
}

function Wallpaper() {
  return (
    <svg viewBox="0 0 1600 40" preserveAspectRatio="none" className="absolute inset-0 h-10 w-[1600px]">
      <defs>
        <filter id="soft" x="-5%" y="-50%" width="110%" height="200%"><feGaussianBlur stdDeviation="4 3" /></filter>
        <linearGradient id="left"><stop offset="0" stopColor="#86887f" /><stop offset=".18" stopColor="#a3a6a0" /><stop offset=".3" stopColor="#b5bab4" /><stop offset=".42" stopColor="#aec8bc" /><stop offset=".6" stopColor="#b3c6bc" /><stop offset="1" stopColor="#c3c5be" /></linearGradient>
      </defs>
      <rect width="1600" height="40" fill="#9a9b94" />
      <g filter="url(#soft)">
        <rect x="-20" y="-10" width="500" height="60" fill="url(#left)" />
        <rect x="476" y="-10" width="245" height="60" fill="#b76658" />
        <rect x="525" y="-10" width="20" height="60" fill="#ad5a4e" />
        <rect x="560" y="20" width="60" height="30" fill="#bd8674" />
        <rect x="595" y="-5" width="40" height="30" fill="#bf5b52" />
        <rect x="640" y="15" width="60" height="35" fill="#bb7464" />
        <rect x="695" y="-10" width="20" height="35" fill="#b85048" />
        <rect x="720" y="-10" width="106" height="60" fill="#cfd2bd" />
        <rect x="790" y="-10" width="30" height="40" fill="#e2e3d0" />
        <rect x="735" y="20" width="50" height="30" fill="#c9d8c8" />
        <rect x="826" y="-10" width="28" height="60" fill="#a3a49c" />
        <rect x="854" y="-10" width="78" height="60" fill="#1a1c1b" />
        <rect x="855" y="26" width="60" height="20" fill="#3a4340" />
        <rect x="932" y="-10" width="103" height="60" fill="#93493f" />
        <rect x="960" y="5" width="35" height="26" fill="#bd6a56" />
        <rect x="985" y="0" width="20" height="30" fill="#b8463f" />
        <rect x="972" y="-5" width="26" height="8" fill="#33201e" />
        <rect x="1035" y="-10" width="135" height="60" fill="#dcc068" />
        <rect x="1092" y="0" width="30" height="50" fill="#d8ae5e" />
        <rect x="1168" y="-10" width="245" height="60" fill="#30312c" />
        <rect x="1190" y="-10" width="20" height="60" fill="#5b523d" />
        <ellipse cx="1280" cy="44" rx="58" ry="38" fill="#b9bfab" />
        <rect x="1345" y="20" width="64" height="30" fill="#4a5c54" />
        <rect x="1412" y="-10" width="200" height="60" fill="#94844f" />
        <rect x="1420" y="0" width="30" height="30" fill="#ab9050" />
        <rect x="1440" y="28" width="110" height="20" fill="#7f8570" />
        <rect x="1560" y="-10" width="60" height="60" fill="#7d7048" />
      </g>
      <path d="M0 .5H1600" stroke="#35332e" /><path d="M0 1.500H1600" stroke="#fff" strokeOpacity=".5" />
    </svg>
  );
}

function Taskbar() {
  return (
    <div className="relative flex h-10 shrink-0 overflow-hidden">
      <Wallpaper />
      <div className="relative flex w-full items-center">
        <svg viewBox="0 0 38 38" className="ml-2 size-[38px]">
          <defs><radialGradient id="orb" cx=".5" cy=".95" r=".9"><stop offset="0" stopColor="#3fd6ff" /><stop offset=".4" stopColor="#1171ab" /><stop offset=".7" stopColor="#17456f" /><stop offset="1" stopColor="#7f9fb2" /></radialGradient></defs>
          <circle cx="19" cy="19" r="17.500" fill="url(#orb)" stroke="#1d4461" />
          <path d="M4 13A16 16 0 0 1 34 13Q19 21 4 13Z" fill="#fff" opacity=".25" />
          <path d="M11 10Q15 7 18.500 9.500L17 18Q13 16 9 18Z" fill="#ee5a24" />
          <path d="M20 10Q24 12 29.500 9.500L28 18Q23 20.500 18.500 18.500Z" fill="#8fc31f" />
          <path d="M8.500 20Q13 17.500 16.700 20L15 28Q11 26 7 28Z" fill="#3aa0e6" />
          <path d="M18.200 20.500Q22 22.500 27.500 20L26 28.500Q21 31 16.500 28.500Z" fill="#fbc52d" />
        </svg>
        <svg viewBox="0 0 32 32" className="ml-7 size-8">
          <path d="M25 21Q22.500 25.500 17 25.500Q9.500 25 9.500 18H29.500Q30 5 17.500 5Q5 6 5 18Q5.500 30 17 30Q27 29.500 29 21ZM9.800 14.500Q11 9.500 17.200 9.500Q23.500 9.500 24.500 14.500Z" fill="#4dbff2" stroke="#2180c4" strokeWidth=".8" />
          <path d="M6 29.500Q-3 27 7 13Q18 0 28 1.500Q32 4 27 11" fill="none" stroke="#f6b91b" strokeWidth="2.600" />
        </svg>
        <div className="ml-[15px]"><TaskButton w={55} extra={1}>
          <svg viewBox="0 0 34 32" className="h-8 w-[34px]">
            <path d="M2 3H14L16 6H31V28H2Z" fill="#f4df8e" stroke="#c9a94a" /><path d="M4 2H11V5H4Z" fill="#fff" /><path d="M5 2H8V4H5Z" fill="#25a53a" /><path d="M13 4H17V7H13Z" fill="#dc3b2c" /><path d="M21 6H25V9H21Z" fill="#2c77cf" />
            <path d="M2 10H32V29H2Z" fill="#f9e8a2" stroke="#d5b65b" /><path d="M6 31V19Q6 18 7 18H28Q29 18 29 19V31H24V23H11V31Z" fill="#9fd8f0" stroke="#549fc8" />
          </svg>
        </TaskButton></div>
        <svg viewBox="0 0 30 28" className="ml-[18px] h-7 w-[30px]">
          <path d="M8 2H27V24L24 26H8Z" fill="#7cbbe0" stroke="#3d81ad" /><path d="M24 2V25" stroke="#3d81ad" /><path d="M1 2H21V26H1Z" fill="#a9d6ef" stroke="#5d9fc8" />
          <circle cx="11.500" cy="14" r="9" fill="#f28019" /><path d="M8.500 8.500L17 14L8.500 19.500Z" fill="#fff" />
        </svg>
        <div className="ml-[17px]"><TaskButton w={52} extra={2}>
          <svg viewBox="0 0 32 24" className="h-6 w-8"><path d="M8 2L27 1L26 15H6Z" fill="#d9e2ec" stroke="#9aa6b3" /><path d="M9.500 3.500H25.500L24.500 13H8.500Z" fill="#7aa2d6" /><path d="M11 5L15 4L18 6L20 4L22 8L20 12L12 13L10 10Z" fill="#e0512a" /><path d="M6 16H26L21 21L1 19Z" fill="#c5cdd6" stroke="#a5aeb8" /><path d="M22 14Q31 14 31 21M6 20Q17 22 30 16" stroke="#f2c563" strokeWidth="1.200" fill="none" /></svg>
        </TaskButton></div>
        <div className="ml-[2px]"><TaskButton w={52} extra={2}>
          <svg viewBox="0 0 30 34" className="h-[34px] w-[30px]">
            <path d="M3 13L10 2L15 8L20 2L27 13Z" fill="#48b95a" stroke="#155f24" /><path d="M7 13L15 5L23 13" fill="#62cf73" stroke="#155f24" />
            <path d="M.5 9V33H29.500V9L26 13H4Z" fill="#eceef2" stroke="#2d3338" /><path d="M1 30.500H29V33H1Z" fill="#1775c4" />
            <circle cx="15" cy="21.500" r="7" fill="#23272b" /><text x="15" y="25" fontSize="11" fontStyle="italic" fontWeight="bold" textAnchor="middle" fill="#fff" fontFamily="Liberation Sans">hp</text>
          </svg>
        </TaskButton></div>
        <div className="ml-[2px]"><TaskButton w={60}>
          <svg viewBox="0 0 32 32" className="size-8">
            <circle cx="16.500" cy="15.500" r="13.500" fill="#1b4f9c" /><path d="M12 3Q24 0 29 11Q24 8 22 10L15 9Z" fill="#3f93d6" />
            <path d="M4 4Q5 8 9 7Q14 7 15 10L12 13Q11 16 14 18Q19 21 22 16Q25 17 23 7Q31 14 29 21Q26 31 15 31Q3 30 1.500 18Q1 9 4 4Z" fill="#e5641c" />
            <path d="M26 6Q32 14 29.500 21Q26 31 15 31Q23 28 25.500 21Q28 14 26 6Z" fill="#f8c42d" />
          </svg>
        </TaskButton></div>
        <div className="ml-[2px]"><TaskButton w={60}>
          <svg viewBox="0 0 28 32" className="h-8 w-7">
            <path d="M4 23H24L27.500 30.500H.5Z" fill="#f58a0b" stroke="#d56b04" /><path d="M12 1H16L22 24Q14 28 6 24Z" fill="#f3801a" />
            <path d="M11.200 5H16.800L18.500 11H9.500Z" fill="#eef0f4" /><path d="M8 16H20L21.200 21Q14 24 6.800 21Z" fill="#eef0f4" />
          </svg>
        </TaskButton></div>
        <div className={'ml-auto flex items-center text-white ' + SEGOE}>
          <Fit w={16} className="-mt-[6px] text-[12px]">RU</Fit>
          <svg viewBox="0 0 32 32" className="ml-[11px] size-8">
            <circle cx="16" cy="16" r="15" fill="#0b1440" stroke="#1c8fe0" strokeWidth="1.800" />
            <path d="M2 16A14 14 0 0 0 30 16Z" fill="#0a2f86" />
            <text x="16" y="27" fontSize="31" fontWeight="bold" textAnchor="middle" fill="#fff" fontFamily="Liberation Sans">?</text>
          </svg>
          <svg viewBox="0 0 8 5" className="ml-[15px] h-[5px] w-2"><path d="M4 0L8 5H0Z" fill="#fff" stroke="#444" strokeWidth=".3" /></svg>
          <svg viewBox="0 0 14 16" className="ml-[14px] h-4 w-[14px]"><path d="M1 5H3L7 1V15L3 11H1Z" fill="#fff" stroke="#333" strokeWidth=".7" /><path d="M10 5Q12.500 8 10 11" stroke="#fff" strokeWidth="1.400" fill="none" /></svg>
          <svg viewBox="0 0 16 16" className="ml-2 size-4"><path d="M8 3V1.500H4V3H1.500V15H8" fill="#ffffff44" stroke="#fff" strokeWidth="1.500" /><path d="M6.500 5.500H14.500V8Q14 10.500 11.500 10.500H9.500Q7 10.500 6.500 8Z" fill="#fff" stroke="#555" strokeWidth=".6" /><path d="M8.500 5.500V2M12.500 5.500V2M10.500 10V16" fill="none" stroke="#fff" strokeWidth="1.500" /></svg>
          <svg viewBox="0 0 16 14" className="ml-[9px] h-[14px] w-4"><path d="M0 11H2V14H0ZM3.500 9H5.500V14H3.500ZM7 6.500H9V14H7ZM10.500 4H12.500V14H10.500ZM14 1H16V14H14Z" fill="#fff" stroke="#444" strokeWidth=".3" /></svg>
          <div className="ml-[18px] flex w-[54px] flex-col items-center pt-px text-[12px] leading-[17px]">
            <Fit w={28}>18:25</Fit>
            <Fit w={54}>24.04.2014</Fit>
          </div>
          <div className="ml-[11px] h-10 w-[15px] rounded-[2px] border border-[#4a452c] bg-gradient-to-b from-white/35 to-white/10 shadow-[inset_0_0_0_1px_rgba(255,255,255,.45)]" />
        </div>
      </div>
    </div>
  );
}

export default function App() {
  return (
    <div className={'flex h-[900px] w-[1600px] flex-col overflow-hidden bg-[#e4e4e4] ' + ARIAL}>
      <div className={SEGOE}>
        <TabStrip />
        <Toolbar />
      </div>
      <div className="flex h-[777px] shrink-0">
        <div className="flex w-[1583px] flex-col overflow-hidden">
          <PageHeader />
          <NavBars />
          <FilterBar />
          <Gantt />
          <div className="mt-[55px] ml-[30px] flex h-[18px] items-end font-['Open_Sans',sans-serif] text-[14.500px] leading-[15px] font-semibold text-[#ababab]">
            <svg viewBox="0 0 14 16" className="h-4 w-[14px]"><path d="M1 6V12.500Q1 14.500 3 14.500H8.500Q10.500 14.500 10.500 12V6Q10.500 3.500 12 2.500M5.800 8V14" stroke="#ababab" strokeWidth="2" fill="none" /><circle cx="12" cy="2.500" r="2.200" fill="#ababab" /></svg>
            <Fit w={63} className="-ml-[1px]">orksection</Fit>
          </div>
        </div>
        <VerticalScroll />
      </div>
      <HorizontalScroll />
      <Taskbar />
    </div>
  );
}
